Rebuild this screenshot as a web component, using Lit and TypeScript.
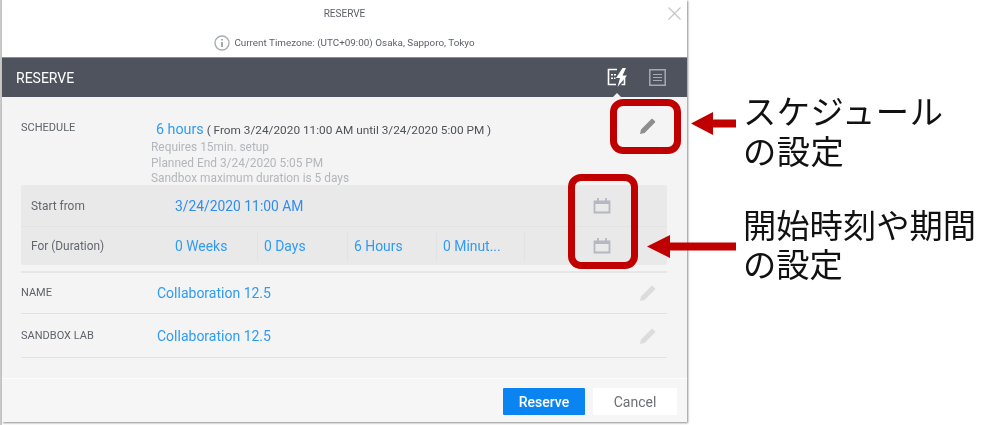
import { LitElement, html, css } from "lit";
import { customElement } from "lit/decorators.js";

const pencil = (c: string) => html`<svg class="pen" viewBox="0 0 18 18" width="18" height="18"><path fill="${c}" d="M1 17l1-4.600L12.400 2a.9.9 0 0 1 1.300 0l2.300 2.300a.9.9 0 0 1 0 1.300L5.600 16z"/></svg>`;
const cal = html`<svg viewBox="0 0 18 16" width="18" height="16"><path fill="none" stroke="#b4b8c2" stroke-width="1.800" d="M1.500 3.500h15v11h-15z"/><path fill="#b4b8c2" d="M1 3h16v3H1zM4 0h1.800v3H4zM12.200 0H14v3h-1.800z"/></svg>`;

@customElement("app-root")
export class AppRoot extends LitElement {
  static styles = css`
    :host { display: block; position: relative; width: 998px; height: 425px; background: #fff; overflow: hidden; font-family: Roboto, "Liberation Sans", sans-serif; filter: blur(.35px); }
    .strip { position: absolute; left: 0; top: 0; bottom: 0; width: 2px; background: #c9c9c9; }
    .modal { margin-left: 2px; width: 685px; height: 422px; display: flex; flex-direction: column; background: #fff; box-shadow: 1px 1px 2px rgba(0,0,0,.45); position: relative; }
    .top { height: 57px; display: flex; flex-direction: column; align-items: center; position: relative; color: #5b5f68; flex: none; }
    .title { font-size: 10px; line-height: 12px; margin-top: 8px; }
    .tz { display: flex; align-items: center; gap: 4px; font-size: 9.9px; line-height: 16px; margin-top: 15px; }
    .close { position: absolute; right: 6px; top: 7px; }
    .bar { height: 40px; flex: none; background: #4f535d; border-top: 1px solid #8b8e95; box-sizing: border-box; display: flex; align-items: center; padding: 0 21px 0 14px; color: #fff; font-size: 14px; position: relative; }
    .bar .name { flex: 1; }
    .bar .i1 { margin-right: 21px; display: flex; }
    .bar .i2 { display: flex; }
    .notch { position: absolute; left: 611px; bottom: 0; width: 0; height: 0; border: 4px solid transparent; border-bottom-color: #f4f4f4; border-top: 0; }
    .body { flex: 1; background: #f4f4f4; padding: 0 20px 0 19px; display: flex; flex-direction: column; color: #5f636b; }
    .sched { display: flex; height: 88px; box-sizing: border-box; padding-top: 22px; position: relative; }
    .label { width: 130px; flex: none; font-size: 11px; line-height: 18px; color: #5f636b; }
    .main { line-height: 20px; font-size: 11.8px; margin: 0 0 0 5px; color: #4e5259; }
    .blue { color: #2f9bf4; }
    .main .blue { font-size: 14.3px; }
    .subs { margin-top: 0; color: #b3b6bc; font-size: 11.9px; line-height: 15.7px; }
    .pen-cell { margin-left: auto; margin-right: 10px; display: flex; align-items: center; }
    .sched .pen-cell { align-self: flex-start; margin-top: -2px; }
    .block { background: #e9e9e9; border-radius: 2px; height: 80px; display: flex; flex-direction: column; flex: none; }
    .brow { flex: 1; display: flex; align-items: center; padding-left: 10px; position: relative; font-size: 11.9px; color: #63676f; }
    .brow.r1 { padding-top: 2px; }
    .brow + .brow { border-top: 1px solid #e3e3e3; }
    .brow .l { width: 144px; flex: none; }
    .brow .v { font-size: 13.85px; color: #2f8df0; }
    .cells { display: flex; align-self: stretch; padding: 4px 0; box-sizing: border-box; }
    .cell { box-sizing: border-box; font-size: 13.9px; color: #2f9bf4; display: flex; align-items: center; white-space: nowrap; }
    .c1 { width: 82px; }
    .c2 { width: 90px; }
    .c3 { width: 89px; }
    .c4 { width: 88px; }
    .c5 { width: 80px; }
    .cell + .cell { border-left: 1px solid #e3e3e3; padding-left: 6px; }
    .cal { position: absolute; left: 572px; top: 50%; margin-top: -8px; display: flex; }
    .r1 .cal { margin-top: -7px; }
    .row { display: flex; align-items: center; font-size: 14px; height: 42px; border-bottom: 1px solid #e2e2e2; box-sizing: content-box; }
    .row.first { border-top: 2px solid #e6e6e6; margin-top: 6px; height: 40px; }
    .row .label { width: 136px; }
    .row + .row { height: 43px; }
    .footer { height: 44px; flex: none; background: #f6f6f6; border-top: 1px solid #fdfdfd; box-sizing: border-box; display: flex; justify-content: flex-end; align-items: flex-start; gap: 8px; padding: 9px 10px 0 0; }
    button { font-family: inherit; border: 0; height: 27px; font-size: 14px; border-radius: 1px; padding: 0; }
    .ok { width: 82px; background: #0a84f0; color: #fff; font-weight: 500; }
    .no { width: 84px; background: #fff; color: #6b6f76; }
    .box { position: absolute; box-sizing: border-box; border: 7px solid #c00000; border-radius: 13px; }
    .b1 { left: 610px; top: 99px; width: 71px; height: 55px; }
    .b2 { left: 568px; top: 174px; width: 70px; height: 95px; }
    .arrow { position: absolute; }
    .note { position: absolute; left: 743px; font-family: "Noto Sans CJK JP", sans-serif; font-size: 33.3px; line-height: 40px; color: #111; white-space: nowrap; }
    .n1 { top: 90px; letter-spacing: .5px; }
    .n2 { top: 204px; line-height: 39px; }
  `;

  render() {
    return html`
      <div class="strip"></div>
      <div class="modal">
        <div class="top">
          <div class="title">RESERVE</div>
          <div class="tz">
            <svg viewBox="0 0 16 16" width="16" height="16"><circle cx="8" cy="8" r="7" fill="none" stroke="#a9adb6" stroke-width="1.400"/><path fill="#8f939c" d="M7.200 7h1.600v5H7.200zM7.200 4h1.600v1.600H7.200z"/></svg>
            <span>Current Timezone: (UTC+09:00) Osaka, Sapporo, Tokyo</span>
          </div>
          <svg class="close" viewBox="0 0 13 13" width="13" height="13"><path d="M.5.5l12 12M12.500.5l-12 12" stroke="#c4c7cd" stroke-width="1.300" fill="none"/></svg>
        </div>
        <div class="bar">
          <span class="name">RESERVE</span>
          <span class="i1"><svg viewBox="0 0 21 19" width="21" height="19"><path fill="none" stroke="#fff" stroke-width="1.600" d="M10 1.500H1.500v15H9M17.500 9v7.500h-3"/><path fill="#fff" d="M15.500 0L9 10h4l-2.500 9L20 7.500h-4.500L19 0zM4 6h2v1.600H4zM7 6h2v1.600H7zM4 9.500h2v1.600H4zM7 9.500h1.500v1.600H7z"/></svg></span>
          <span class="i2"><svg viewBox="0 0 17 17" width="17" height="17"><path fill="none" stroke="#a6a9af" stroke-width="1.500" d="M.8.8h15.400v15.400H.8z"/><path stroke="#a6a9af" stroke-width="1" d="M4 5.500h9M4 8.500h9M4 11.500h9"/></svg></span>
          <span class="notch"></span>
        </div>
        <div class="body">
          <div class="sched">
            <div class="label">SCHEDULE</div>
            <div>
              <div class="main"><span class="blue">6 hours</span> ( From 3/24/2020 11:00 AM until 3/24/2020 5:00 PM )</div>
              <div class="subs">Requires 15min. setup<br />Planned End 3/24/2020 5:05 PM<br />Sandbox maximum duration is 5 days</div>
            </div>
            <div class="pen-cell">${pencil("#8e8e8e")}</div>
          </div>
          <div class="block">
            <div class="brow r1"><span class="l">Start from</span><span class="v">3/24/2020 11:00 AM</span><span class="cal">${cal}</span></div>
            <div class="brow"><span class="l">For (Duration)</span>
              <div class="cells">
                <div class="cell c1">0 Weeks</div><div class="cell c2">0 Days</div><div class="cell c3">6 Hours</div><div class="cell c4">0 Minut...</div><div class="cell c5"></div>
              </div>
              <span class="cal">${cal}</span></div>
          </div>
          <div class="row first"><div class="label">NAME</div><div class="blue">Collaboration 12.5</div><div class="pen-cell">${pencil("#dcdcdc")}</div></div>
          <div class="row"><div class="label">SANDBOX LAB</div><div class="blue">Collaboration 12.5</div><div class="pen-cell">${pencil("#dcdcdc")}</div></div>
        </div>
        <div class="footer"><button class="ok">Reserve</button><button class="no">Cancel</button></div>
      </div>
      <div class="box b1"></div>
      <div class="box b2"></div>
      <svg class="arrow" style="left:690px;top:110px" width="48" height="28" viewBox="0 0 48 28"><path fill="#c00000" d="M1 13.500L23 2v7.500h23v8H23V25z"/></svg>
      <svg class="arrow" style="left:646px;top:233px" width="92" height="28" viewBox="0 0 92 28"><path fill="#c00000" d="M1 13.500L24 2v7.500h66v8H24V25z"/></svg>
      <div class="note n1">スケジュール<br />の設定</div>
      <div class="note n2">開始時刻や期間<br />の設定</div>
    `;
  }
}
